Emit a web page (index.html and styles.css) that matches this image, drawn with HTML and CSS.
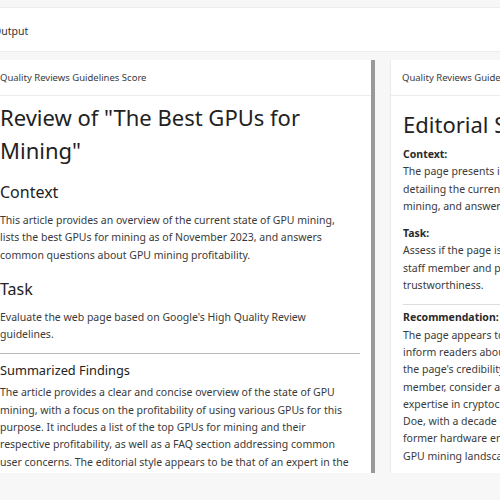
FILE: index.html
```html
<!DOCTYPE html>
<html lang="en">
<head>
    <meta charset="UTF-8">
    <meta name="viewport" content="width=device-width, initial-scale=1.0">
    <title>Output</title>
    <link rel="stylesheet" href="styles.css">
</head>
<body>
    <div class="page">
        <div class="top-band"></div>
        <header class="output-header">Output</header>

        <section class="panels">
            <!-- Painel da esquerda: Score -->
            <div class="panel panel-left">
                <div class="panel-body">
                    <div class="panel-header">Quality Reviews Guidelines Score</div>
                    <div class="panel-content">
                        <h1>Review of "The Best GPUs for Mining"</h1>
                        <h2>Context</h2>
                        <p>This article provides an overview of the current state of GPU mining, lists the best GPUs for mining as of November 2023, and answers common questions about GPU mining profitability.</p>
                        <h2>Task</h2>
                        <p>Evaluate the web page based on Google's High Quality Review guidelines.</p>
                        <hr>
                        <h3>Summarized Findings</h3>
                        <p>The article provides a clear and concise overview of the state of GPU mining, with a focus on the profitability of using various GPUs for this purpose. It includes a list of the top GPUs for mining and their respective profitability, as well as a FAQ section addressing common user concerns. The editorial style appears to be that of an expert in the field, with detailed figures and practical advice for readers.</p>
                    </div>
                </div>
                <div class="divider"></div>
            </div>

            <!-- Painel da direita: Editorial -->
            <div class="panel panel-right">
                <div class="panel-body">
                    <div class="panel-header">Quality Reviews Guidelines Editorial</div>
                    <div class="panel-content">
                        <h1 class="big">Editorial Staff Review</h1>
                        <p><strong>Context:</strong><br>
                        The page presents information on the state of GPU mining in 2023, detailing the current profitability of various top GPUs for crypto mining, and answering common questions from readers.</p>
                        <p><strong>Task:</strong><br>
                        Assess if the page is written by an expert or by experienced editorial staff member and provides sufficient evidence of expertise and trustworthiness.</p>
                        <hr class="light">
                        <p><strong>Recommendation:</strong><br>
                        The page appears to be written by a knowledgeable author aiming to inform readers about GPU mining profitability. However, to enhance the page's credibility and show it was written by an expert staff member, consider adding a short author bio that highlights their expertise in cryptocurrency mining. For example: "Written by John Doe, with a decade of experience in cryptocurrency mining and as a former hardware engineer, John offers expert insights into today's GPU mining landscape."</p>
                    </div>
                </div>
            </div>
        </section>
    </div>
</body>
</html>
```

FILE: styles.css
```css
body {
    margin: 0;
    background-color: #f7f7f7;
    font-family: "Noto Sans", "Open Sans", sans-serif;
    color: #3a3a3a;
    overflow: hidden;
}
.page {
    margin-left: -19px;
    width: 820px;
}
.top-band {
    height: 7px;
}
.output-header {
    height: 40px;
    line-height: 40px;
    padding: 3px 0 0 12px;
    background-color: #fff;
    border-top: 1px solid #ececec;
    border-bottom: 1px solid #ececec;
    font-size: 10.5px;
    color: #333;
}
.panels {
    display: flex;
    gap: 15px;
    padding: 8px 7px 27px;
}
.panel {
    display: flex;
    width: 387px;
    height: 413px;
    background-color: #fff;
    overflow: hidden;
}
.panel-right {
    border-left: 1px solid #eaeaea;
    width: 400px;
}
.panel-body {
    flex: 1;
    min-width: 0;
}
.divider {
    width: 4px;
    background-color: #999;
}
.panel-header {
    height: 35px;
    line-height: 36px;
    padding-left: 12px;
    border-bottom: 1px solid #ececec;
    font-size: 9.5px;
    color: #3a3a3a;
}
.panel-right .panel-header {
    padding-left: 11px;
}
.panel-content {
    padding: 5px 11px 0 12px;
    width: 348px;
    font-size: 10.5px;
    line-height: 17.3px;
}
.panel-left .panel-content {
    width: 353px;
    padding-right: 6px;
}
h1 {
    margin: 0;
    font-size: 22px;
    line-height: 33px;
    font-weight: 400;
    color: #222;
}
h1.big {
    margin: 7px 0 5px;
    white-space: nowrap;
}
h2 {
    margin: 13px 0 7px;
    font-size: 16px;
    line-height: 25px;
    font-weight: 400;
    color: #222;
}
h3 {
    margin: 5px 0 3px;
    font-size: 12.8px;
    line-height: 22px;
    font-weight: 400;
    color: #222;
}
p {
    margin: 0;
}
.panel-right p {
    margin-bottom: 10px;
}
.panel-right strong {
    color: #2a2a2a;
}
hr {
    margin: 10px -7px 0 0;
    border: none;
    border-top: 1px solid #bbb;
}
hr.light {
    margin: 0 0 4px;
    border-top-color: #ddd;
}
```
